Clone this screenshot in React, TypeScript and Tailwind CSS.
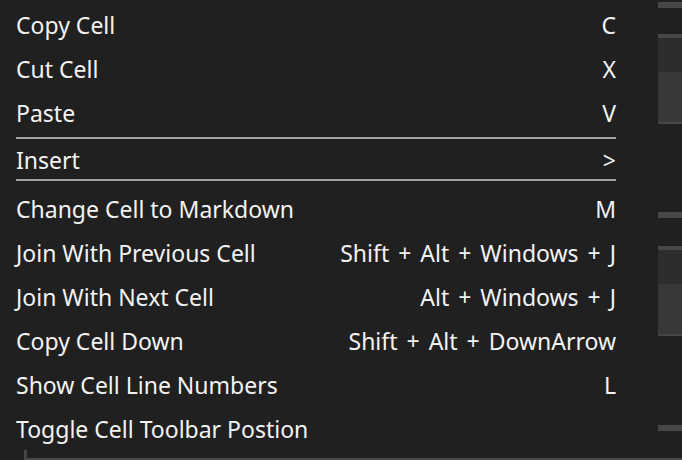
import React from 'react';

interface MenuItem {
  label: string;
  shortcut?: string;
}

const TOP_ITEMS: MenuItem[] = [
  { label: 'Copy Cell', shortcut: 'C' },
  { label: 'Cut Cell', shortcut: 'X' },
  { label: 'Paste', shortcut: 'V' },
];

const BOTTOM_ITEMS: MenuItem[] = [
  { label: 'Change Cell to Markdown', shortcut: 'M' },
  { label: 'Join With Previous Cell', shortcut: 'Shift + Alt + Windows + J' },
  { label: 'Join With Next Cell', shortcut: 'Alt + Windows + J' },
  { label: 'Copy Cell Down', shortcut: 'Shift + Alt + DownArrow' },
  { label: 'Show Cell Line Numbers', shortcut: 'L' },
  { label: 'Toggle Cell Toolbar Postion' },
];

const Row: React.FC<{ item: MenuItem; height?: string }> = ({ item, height = 'h-[44px]' }) => (
  <div className={`flex items-center justify-between pt-[2px] ${height}`}>
    <span>{item.label}</span>
    {item.shortcut && <span className="[word-spacing:3px]">{item.shortcut}</span>}
  </div>
);

const Separator = () => <div className="h-[2px] bg-[#a3a3a3]" />;

// scrollbar-ish panel on the right edge
const CellStrip = () => (
  <div className="flex flex-col">
    <div className="h-[4px] bg-[#474747]" />
    <div className="h-[34px] bg-[#2d2d2d]" />
    <div className="h-[50px] bg-[#383838]" />
    <div className="h-[2px] bg-[#474747]" />
  </div>
);

export default function App() {
  return (
    <div
      className="w-[682px] h-[460px] bg-[#202020] text-[#f3f3f3] flex flex-col overflow-hidden"
      style={{ fontFamily: '"Noto Sans", "Open Sans", sans-serif' }}
    >
      <div className="flex h-[450px]">
        {/* Context menu */}
        <div className="w-[658px] pl-[16px] pr-[42px] pt-[2px] text-[23px] leading-none">
          {TOP_ITEMS.map((item) => (
            <Row key={item.label} item={item} />
          ))}
          <div className="mt-[3px]">
            <Separator />
          </div>
          <Row item={{ label: 'Insert', shortcut: '>' }} height="h-[40px]" />
          <Separator />
          <div className="mt-[5px]">
            {BOTTOM_ITEMS.map((item) => (
              <Row key={item.label} item={item} />
            ))}
          </div>
        </div>

        {/* Right edge of the notebook behind the menu */}
        <div className="w-[24px] flex flex-col">
          <div className="mt-[2px] h-[6px] bg-[#474747]" />
          <div className="mt-[26px]">
            <CellStrip />
          </div>
          <div className="mt-[88px] h-[6px] bg-[#474747]" />
          <div className="mt-[28px]">
            <CellStrip />
          </div>
          <div className="mt-[89px] h-[6px] bg-[#474747]" />
        </div>
      </div>

      <div className="h-[10px] pl-[24px] flex">
        <div className="flex-1 border-l-[3px] border-b-[2px] border-[#474747]" />
      </div>
    </div>
  );
}
